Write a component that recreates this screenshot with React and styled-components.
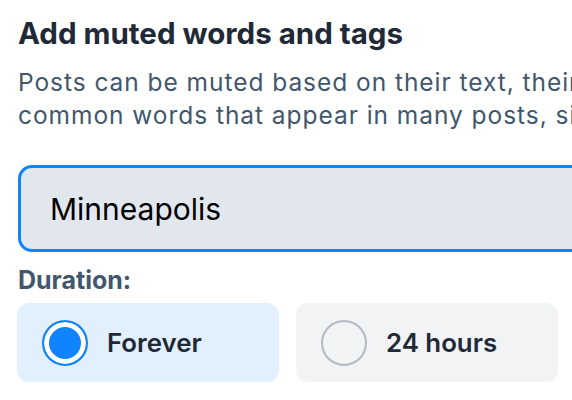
import React, { useState } from "react";
import styled, { createGlobalStyle } from "styled-components";

const GlobalStyle = createGlobalStyle`
  html, body {
    margin: 0;
    padding: 0;
    background: #ffffff;
    overflow: hidden;
  }
  body {
    font-family: Inter, "Noto Sans", "Liberation Sans", sans-serif;
  }
`;

const durations = [
  { id: "forever", label: "Forever" },
  { id: "24h", label: "24 hours" },
  { id: "7d", label: "7 days" },
  { id: "30d", label: "30 days" },
];

const App = () => {
  const [word, setWord] = useState("Minneapolis");
  const [duration, setDuration] = useState("forever");

  return (
    <Page>
      <GlobalStyle />
      <Title>Add muted words and tags</Title>
      <Description>
        Posts can be muted based on their text, their tags, or both. We recommend avoiding
        <br />
        common words that appear in many posts, since it can result in no posts being shown.
      </Description>
      <WordInput value={word} onChange={(e) => setWord(e.target.value)} />
      <Label>Duration:</Label>
      <Options>
        {durations.map((d) => (
          <Option
            key={d.id}
            $active={duration === d.id}
            onClick={() => setDuration(d.id)}
          >
            <Radio $active={duration === d.id} />
            <OptionText>{d.label}</OptionText>
          </Option>
        ))}
      </Options>
    </Page>
  );
};

export default App;

const Page = styled.div`
  width: 1100px;
  padding: 16px 18px 0 18px;
  display: flex;
  flex-direction: column;
`;

const Title = styled.h1`
  margin: 0;
  font-size: 29.5px;
  line-height: 34px;
  font-weight: 700;
  color: #1f2937;
`;

const Description = styled.p`
  margin: 16px 0 0 0;
  font-size: 24.5px;
  line-height: 33px;
  letter-spacing: 0.95px;
  color: #42576c;
  white-space: nowrap;
`;

const WordInput = styled.input`
  margin-top: 33px;
  box-sizing: border-box;
  width: 100%;
  height: 87px;
  border: 3px solid #1083fe;
  border-radius: 14px;
  background: #e2e7ee;
  padding: 0 29px;
  font-family: Inter, "Noto Sans", sans-serif;
  font-size: 30px;
  color: #000000;
  outline: none;
`;

const Label = styled.div`
  margin-top: 13px;
  font-size: 25px;
  line-height: 30px;
  font-weight: 650;
  color: #42576c;
`;

const Options = styled.div`
  margin-top: 8px;
  display: grid;
  grid-template-columns: repeat(4, 262px);
  gap: 17px;
  margin-left: -1px;
`;

const Option = styled.div`
  height: 79px;
  box-sizing: border-box;
  border-radius: 12px;
  background: ${(p) => (p.$active ? "#e2f0fd" : "#f1f3f5")};
  display: flex;
  align-items: center;
  padding-left: 25px;
  gap: 19px;
  cursor: pointer;
`;

const Radio = styled.span`
  box-sizing: border-box;
  width: 46px;
  height: 46px;
  border-radius: 50%;
  border: 2px solid ${(p) => (p.$active ? "#1083fe" : "#b1bac4")};
  background: ${(p) => (p.$active ? "#1083fe" : "#f1f3f5")};
  box-shadow: ${(p) => (p.$active ? "inset 0 0 0 5px #ffffff" : "none")};
  flex-shrink: 0;
`;

const OptionText = styled.span`
  font-size: 25.8px;
  font-weight: 600;
  color: #1f2937;
`;
